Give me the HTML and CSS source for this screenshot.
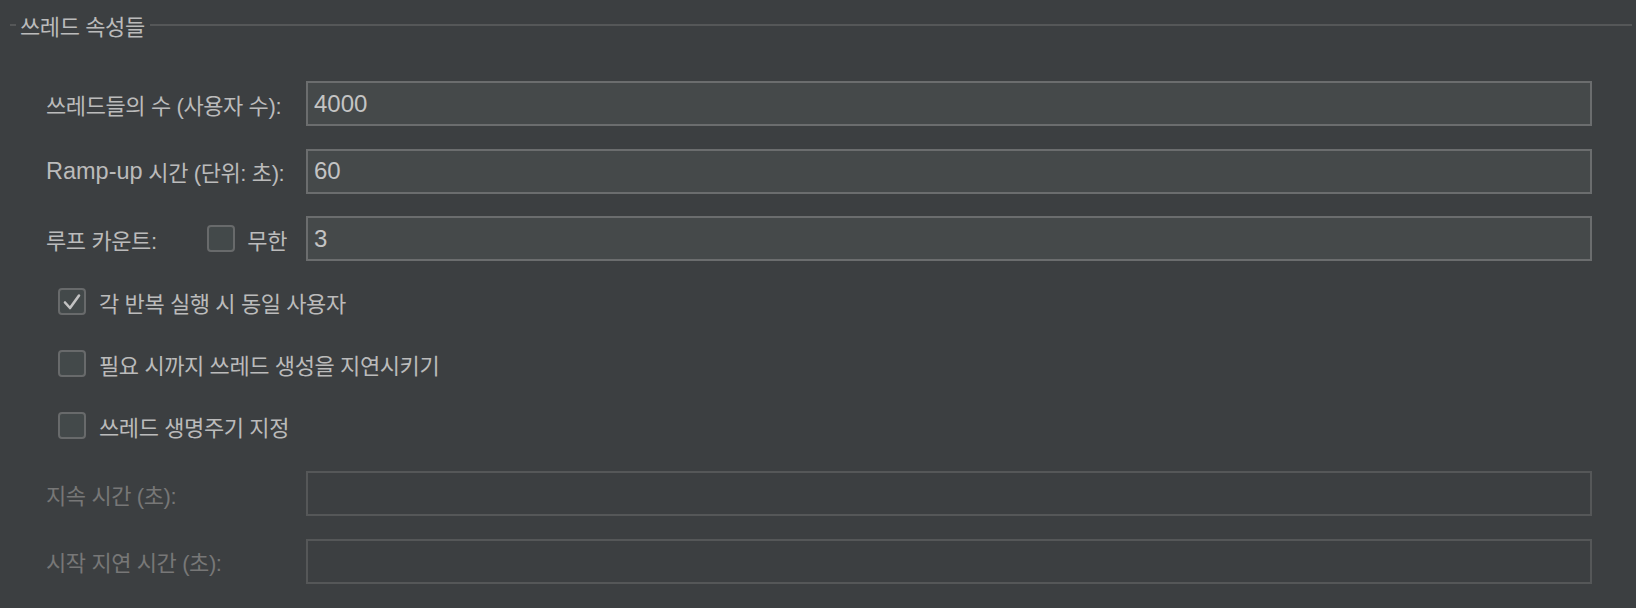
FILE: index.html
```html
<!DOCTYPE html>
<html lang="ko">
<head>
  <meta charset="UTF-8">
  <meta name="viewport" content="width=device-width, initial-scale=1">
  <title>쓰레드 속성들</title>
  <link rel="stylesheet" href="styles.css">
</head>
<body>
  <div class="panel">
    <div class="legend">
      <span class="legend-dash"></span>
      <span class="legend-title">쓰레드 속성들</span>
      <span class="legend-line"></span>
    </div>

    <div class="form">
      <label class="field-label">쓰레드들의 수 (사용자 수):</label>
      <input class="field" type="text" value="4000">

      <label class="field-label"><span class="lat">Ramp-up</span>&nbsp;시간 (단위: 초):</label>
      <input class="field" type="text" value="60">

      <div class="field-label">
        <span>루프 카운트:</span>
        <span class="inline-check">
          <span class="box"></span>
          <span>무한</span>
        </span>
      </div>
      <input class="field" type="text" value="3">
    </div>

    <div class="checks">
      <div class="check">
        <span class="box">
          <svg width="20" height="18" viewBox="0 0 20 18">
            <path d="M3 9.5 L8 15 L17 2.5" fill="none" stroke="#c2c2c2" stroke-width="2.6" stroke-linecap="round" stroke-linejoin="round"/>
          </svg>
        </span>
        <span>각 반복 실행 시 동일 사용자</span>
      </div>
      <div class="check">
        <span class="box"></span>
        <span>필요 시까지 쓰레드 생성을 지연시키기</span>
      </div>
      <div class="check">
        <span class="box"></span>
        <span>쓰레드 생명주기 지정</span>
      </div>
    </div>

    <div class="form disabled">
      <label class="field-label">지속 시간 (초):</label>
      <input class="field" type="text" disabled>

      <label class="field-label">시작 지연 시간 (초):</label>
      <input class="field" type="text" disabled>
    </div>
  </div>
</body>
</html>
```

FILE: styles.css
```css
body {
  margin: 0;
  background-color: #3c3f41;
  color: #bbbbbb;
  font-family: 'Liberation Sans', 'Noto Sans CJK KR', sans-serif;
  font-size: 22px;
}

.panel {
  padding: 12px 4px 0 10px;
}

.legend {
  display: flex;
  align-items: center;
  height: 26px;
}

.legend-dash {
  width: 6px;
  height: 2px;
  background-color: #555758;
}

.legend-title {
  padding: 0 5px 0 4px;
  letter-spacing: -0.4px;
}

.legend-line {
  flex: 1;
  height: 2px;
  background-color: #555758;
}

.form {
  display: grid;
  grid-template-columns: 260px 1fr;
  row-gap: 22.5px;
  padding: 0 40px 0 36px;
  margin-top: 43px;
  align-items: center;
}

.field-label {
  display: flex;
  align-items: center;
  padding-right: 19px;
  letter-spacing: -0.4px;
  white-space: nowrap;
}

.lat {
  font-size: 23.5px;
  letter-spacing: 0;
}

.inline-check {
  display: flex;
  align-items: center;
  gap: 12px;
  margin-left: auto;
}

.field {
  box-sizing: border-box;
  height: 45px;
  margin: 0;
  padding: 0 6px;
  border: 2px solid #6b6d6e;
  border-radius: 0;
  background-color: #45494a;
  color: #c4c4c4;
  font-family: inherit;
  font-size: 24px;
  outline: none;
}

.box {
  box-sizing: border-box;
  display: inline-flex;
  align-items: center;
  justify-content: center;
  width: 28px;
  height: 27px;
  border: 2px solid #686a6b;
  border-radius: 4px;
  background-color: #43494a;
}

.checks {
  display: flex;
  flex-direction: column;
  gap: 35px;
  margin-top: 27px;
  padding-left: 48px;
}

.check {
  display: flex;
  align-items: center;
  gap: 13px;
  height: 27px;
  letter-spacing: -0.4px;
}

.disabled {
  margin-top: 32px;
}

.disabled .field-label {
  color: #777777;
}

.disabled .field {
  border-color: #555758;
  background-color: #3c3f41;
}
```
